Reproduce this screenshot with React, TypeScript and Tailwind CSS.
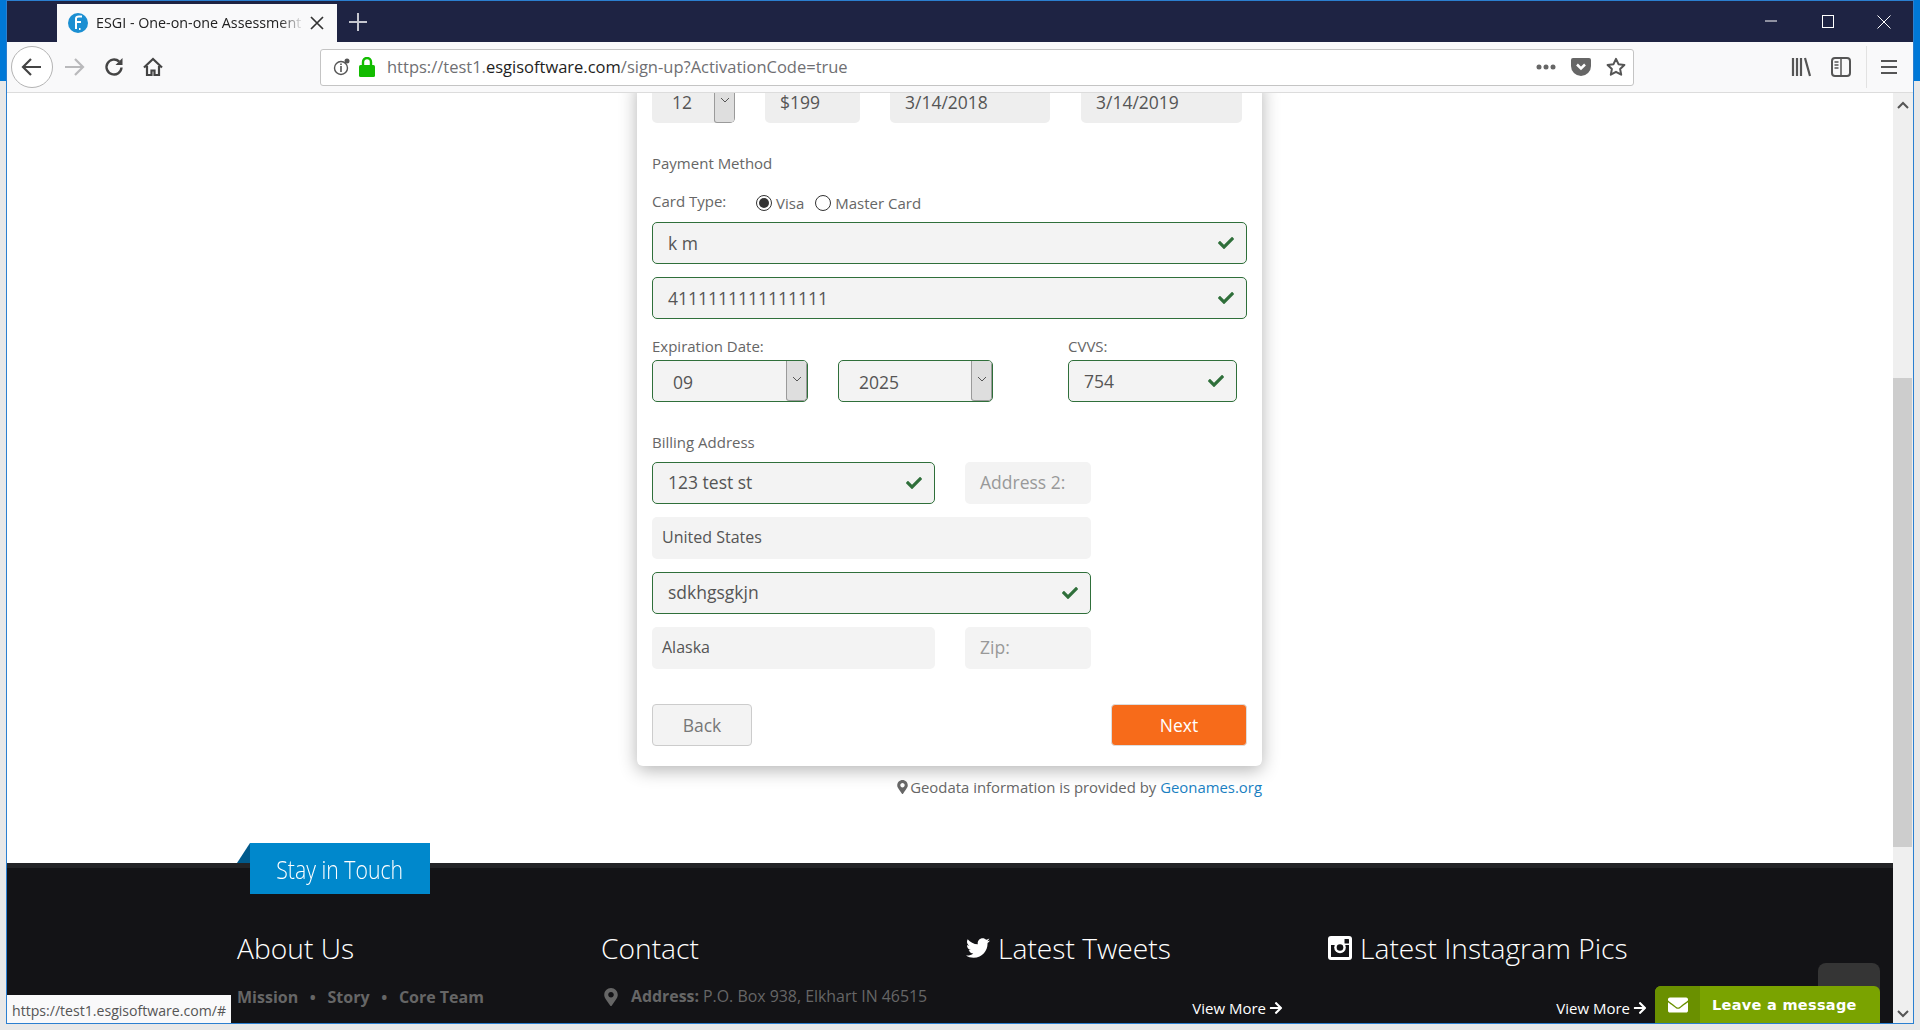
import { ReactNode } from 'react';
import { FaArrowRight, FaCheck, FaEnvelope, FaMapMarkerAlt, FaTwitter } from 'react-icons/fa';

const Check = () => <FaCheck className="w-4 h-4 text-[#2f6f3a] shrink-0" />;

const Field = ({ value, className, valid, placeholder, inset = 'pl-[15px]' }: any) => (
  <div
    className={`h-[42px] rounded-[5px] bg-[#f3f3f3] flex items-center justify-between pr-3 text-[17.5px] ${inset} ${
      valid ? 'border border-[#2f6f3a]' : ''
    } ${placeholder ? 'text-[#999]' : 'text-[#555]'} ${className}`}
  >
    <span>{value}</span>
    {valid && <Check />}
  </div>
);

const Picker = ({ value, className, valid }: any) => (
  <div
    className={`h-[42px] rounded-[5px] bg-[#f3f3f3] flex items-center justify-between text-[17.5px] text-[#555] pl-5 overflow-hidden ${
      valid ? 'border border-[#2f6f3a]' : ''
    } ${className}`}
  >
    <span className={valid ? 'pt-[2px]' : ''}>{value}</span>
    <div className="w-[21px] h-full bg-[#dedede] border-l border-r border-b border-[#9a9a9a] rounded-b-[3px] flex items-center justify-center shrink-0">
      <svg width="10" height="6" viewBox="0 0 10 6" className="-mt-1">
        <path d="M1 1l4 4 4-4" fill="none" stroke="#555" strokeWidth="1" />
      </svg>
    </div>
  </div>
);

const Radio = ({ on }: { on?: boolean }) => (
  <span className="w-4 h-4 rounded-full border border-[#333] bg-white flex items-center justify-center">
    {on && <span className="w-[10px] h-[10px] rounded-full bg-[#333]" />}
  </span>
);

const FooterColumn = ({ title, icon, children }: { title: string; icon?: ReactNode; children: ReactNode }) => (
  <div>
    <div className="h-10 flex items-center gap-2 text-[28.2px] font-light text-white whitespace-nowrap">
      {icon}
      {title}
    </div>
    {children}
  </div>
);

const ViewMore = () => (
  <div className="mt-[30px] flex items-center justify-end gap-[3px] h-5 text-[15px] font-medium text-white">
    View More <FaArrowRight className="w-[14px] h-[14px]" />
  </div>
);

const TitleBar = () => (
  <div className="h-[41px] bg-[#1e2343] flex shrink-0 pl-[50px] pr-[22px]">
    <div className="mt-[3px] w-[280px] h-[38px] bg-[#f9f9fa] flex items-center pl-[11px]">
      <svg width="20" height="20" viewBox="0 0 20 20" className="shrink-0">
        <circle cx="10" cy="10" r="10" fill="#1b8fd2" />
        <path d="M8 16V5.500C8 4 9.500 3.500 11 3.500h3M8 9h5M11 16h1.500" fill="none" stroke="#fff" strokeWidth="2" />
      </svg>
      <span className="ml-2 w-[208px] overflow-hidden whitespace-nowrap text-[14.3px] text-[#222] [mask-image:linear-gradient(to_right,#000_88%,transparent)]">
        ESGI - One-on-one Assessment Tool
      </span>
      <svg width="14" height="14" viewBox="0 0 14 14" className="ml-[6px] shrink-0">
        <path d="M1 1l12 12M13 1L1 13" stroke="#333" strokeWidth="1.7" />
      </svg>
    </div>
    <svg width="18" height="18" viewBox="0 0 18 18" className="ml-[12px] mt-[12px] shrink-0">
      <path d="M9 0v18M0 9h18" stroke="#c5c6cf" strokeWidth="2" />
    </svg>
    <div className="ml-auto flex items-start">
      <svg width="12" height="2" viewBox="0 0 12 2" className="mt-[19px]">
        <path d="M0 1h12" stroke="#fff" />
      </svg>
      <svg width="12" height="13" viewBox="0 0 12 13" className="ml-[45px] mt-[14px]">
        <rect x=".5" y=".5" width="11" height="12" fill="none" stroke="#fff" />
      </svg>
      <svg width="14" height="14" viewBox="0 0 14 14" className="ml-[43px] mt-[14px]">
        <path d="M.5.5l13 13M13.500.5l-13 13" stroke="#fff" />
      </svg>
    </div>
  </div>
);

const Toolbar = () => (
  <div className="h-[51px] bg-[#f9f9fa] border-b border-[#dcdcdc] flex items-center shrink-0 pl-[4px] text-[#4a4a4f]">
    <div className="w-[42px] h-[42px] rounded-full border border-[#b4b4b4] bg-white flex items-center justify-center shrink-0">
      <svg width="22" height="20" viewBox="0 0 22 20">
        <path d="M20 10H3M10 2l-8 8 8 8" fill="none" stroke="#444" strokeWidth="2.2" />
      </svg>
    </div>
    <svg width="22" height="20" viewBox="0 0 22 20" className="ml-[10px] shrink-0">
      <path d="M2 10h17M12 2l8 8-8 8" fill="none" stroke="#b9b9bb" strokeWidth="2.2" />
    </svg>
    <svg width="20" height="20" viewBox="0 0 20 20" className="ml-[19px] shrink-0">
      <path d="M17.500 10.500a7.500 7.500 0 1 1-2.400-6" fill="none" stroke="#444" strokeWidth="2.4" />
      <path d="M18.500 1v7h-7z" fill="#444" />
    </svg>
    <svg width="20" height="20" viewBox="0 0 20 20" className="ml-[19px] shrink-0">
      <path d="M1 10.500L10 2l9 8.500M4 9v9h4.500v-4.500h3V18H16V9" fill="none" stroke="#444" strokeWidth="2.2" />
    </svg>
    <div className="ml-[157px] w-[1314px] h-[37px] bg-white border border-[#c4c4c4] rounded-[3px] flex items-center pl-3 shrink-0">
      <svg width="18" height="18" viewBox="0 0 18 18" className="shrink-0">
        <circle cx="8" cy="10" r="6.500" fill="none" stroke="#555" strokeWidth="1.4" />
        <path d="M8 8v6M8 5.500v1.500" stroke="#555" strokeWidth="1.6" />
        <circle cx="14" cy="3" r="2.500" fill="#555" />
      </svg>
      <svg width="16" height="20" viewBox="0 0 16 20" className="ml-2 shrink-0">
        <rect y="8" width="16" height="12" rx="1.500" fill="#12bc00" />
        <path d="M4 9V5a4 4 0 0 1 8 0v4" fill="none" stroke="#12bc00" strokeWidth="2.4" />
      </svg>
      <span className="ml-3 text-[16.5px] text-[#6f6f73] whitespace-nowrap">
        https://test1.<span className="text-[#1e1e22]">esgisoftware.com</span>/sign-up?ActivationCode=true
      </span>
      <div className="ml-auto flex items-center pr-[7px]">
        <svg width="20" height="6" viewBox="0 0 20 6">
          <circle cx="3" cy="3" r="2.500" fill="#666" />
          <circle cx="10" cy="3" r="2.500" fill="#666" />
          <circle cx="17" cy="3" r="2.500" fill="#666" />
        </svg>
        <svg width="20" height="18" viewBox="0 0 20 18" className="ml-[15px]">
          <path d="M2 0h16a2 2 0 0 1 2 2v6a10 10 0 0 1-20 0V2a2 2 0 0 1 2-2z" fill="#666" />
          <path d="M6 6.500l4 4 4-4" fill="none" stroke="#fff" strokeWidth="2.5" />
        </svg>
        <svg width="20" height="20" viewBox="0 0 20 20" className="ml-[15px]">
          <path d="M10 1.800l2.500 5.400 5.900.7-4.300 4 1.100 5.800L10 14.800l-5.200 2.900 1.100-5.800-4.300-4 5.900-.7z" fill="none" stroke="#555" strokeWidth="2" strokeLinejoin="round" />
        </svg>
      </div>
    </div>
    <svg width="20" height="20" viewBox="0 0 20 20" className="ml-[157px] shrink-0">
      <path d="M2 1v18M6 1v18M10 1v18M14 1l5 18" stroke="#555" strokeWidth="2.2" fill="none" />
    </svg>
    <svg width="20" height="20" viewBox="0 0 20 20" className="ml-[20px] shrink-0">
      <rect x="1" y="1" width="18" height="18" rx="3" fill="none" stroke="#555" strokeWidth="2" />
      <path d="M10 1v18M3.500 5h4M3.500 8h4M3.500 11h4" stroke="#555" strokeWidth="1.5" />
    </svg>
    <div className="ml-[15px] w-px h-[42px] bg-[#e2e2e2] shrink-0" />
    <svg width="16" height="16" viewBox="0 0 16 16" className="ml-[14px] shrink-0">
      <path d="M0 2h16M0 8h16M0 14h16" stroke="#555" strokeWidth="2.2" />
    </svg>
  </div>
);

const SignUpCard = () => (
  <div className="w-[625px] ml-[630px] -mt-[12px] bg-white rounded-b-[6px] shadow-[0_4px_18px_rgba(0,0,0,0.3)] pl-[15px] pr-[15px] pb-5 text-[#666] text-[15px]">
    <div className="flex">
      <Picker value="12" className="w-[83px] !bg-[#eee]" />
      <Field value="$199" className="w-[95px] ml-[30px] !bg-[#eee]" />
      <Field value="3/14/2018" className="w-[160px] ml-[30px] !bg-[#eee]" />
      <Field value="3/14/2019" className="w-[161px] ml-[31px] !bg-[#eee]" />
    </div>
    <div className="mt-[30px] h-5 leading-5">Payment Method</div>
    <div className="mt-5 h-5 flex items-center">
      <span className="w-[104px] pb-[3px]">Card Type:</span>
      <Radio on />
      <span className="ml-1 mt-px">Visa</span>
      <span className="ml-[11px]">
        <Radio />
      </span>
      <span className="ml-1 mt-px">Master Card</span>
    </div>
    <Field value="k m" valid className="mt-[9px]" />
    <Field value="4111111111111111" valid className="mt-[13px]" />
    <div className="mt-[17px] flex">
      <div className="w-[156px]">
        <div className="h-5 leading-5 mb-1 whitespace-nowrap">Expiration Date:</div>
        <Picker value="09" valid />
      </div>
      <div className="w-[155px] ml-[30px] pt-6">
        <Picker value="2025" valid />
      </div>
      <div className="w-[169px] ml-[75px]">
        <div className="h-5 leading-5 mb-1">CVVS:</div>
        <Field value="754" valid />
      </div>
    </div>
    <div className="mt-[30px] mb-[10px] h-5 leading-5">Billing Address</div>
    <div className="w-[439px] flex flex-col gap-[13px]">
      <div className="flex justify-between">
        <Field value="123 test st" valid className="w-[283px] pb-px" />
        <Field value="Address 2:" placeholder className="w-[126px] pb-px" />
      </div>
      <Field value="United States" inset="pl-[10px]" className="!text-[16px] pb-[2px]" />
      <Field value="sdkhgsgkjn" valid className="pb-px" />
      <div className="flex justify-between">
        <Field value="Alaska" inset="pl-[10px]" className="w-[283px] !text-[16px] pb-[2px]" />
        <Field value="Zip:" placeholder className="w-[126px] pb-px" />
      </div>
    </div>
    <div className="mt-[35px] flex justify-between text-[17.5px]">
      <button className="w-[100px] h-[42px] bg-[#f3f3f3] border border-[#ccc] rounded-[4px] text-[#777]">Back</button>
      <button className="w-[136px] h-[42px] bg-[#f76b1a] border border-[#ddd] rounded-[4px] text-white">Next</button>
    </div>
  </div>
);

const Footer = () => (
  <div className="relative mt-[66px] h-[160px] bg-[#131316] border-t-[5px] border-[#222326] pl-[230px]">
    <div className="absolute left-[230px] -top-[25px] w-[13px] h-5 bg-[#005a8c] [clip-path:polygon(100%_0,100%_100%,0_100%)]" />
    <div className="absolute left-[243px] -top-[25px] w-[180px] h-[51px] bg-[#0088cc] flex items-center justify-center pt-[3px] text-white text-[25px] font-light">
      <span className="scale-x-[0.85] whitespace-nowrap">Stay in Touch</span>
    </div>
    <div className="pt-[60px] grid grid-cols-[364px_365px_362px_319px]">
      <FooterColumn title="About Us">
        <div className="mt-[19px] h-5 leading-5 text-[16px] font-bold text-[#666] whitespace-nowrap">
          Mission <span className="mx-[7.5px]">•</span> Story <span className="mx-[7.5px]">•</span> Core Team
        </div>
      </FooterColumn>
      <FooterColumn title="Contact">
        <div className="mt-[19px] h-5 flex items-center text-[15.9px] text-[#666] whitespace-nowrap">
          <FaMapMarkerAlt className="w-[14px] h-[18px] ml-[3px] mr-[13px]" />
          <span className="font-bold mr-1">Address:</span> P.O. Box 938, Elkhart IN 46515
        </div>
      </FooterColumn>
      <FooterColumn title="Latest Tweets" icon={<FaTwitter className="w-6 h-6 text-white" />}>
        <div className="w-[317px]">
          <ViewMore />
        </div>
      </FooterColumn>
      <FooterColumn
        title="Latest Instagram Pics"
        icon={
          <svg width="24" height="24" viewBox="0 0 24 24" className="shrink-0">
            <rect width="24" height="24" rx="3" fill="#fff" />
            <path d="M3 11h18v9.500a.5.5 0 0 1-.5.5h-17a.5.5 0 0 1-.5-.5z" fill="#131316" />
            <rect x="3" y="9" width="18" height="2" fill="#131316" />
            <circle cx="12" cy="11.500" r="5.800" fill="#fff" />
            <circle cx="12" cy="11.500" r="3.300" fill="#131316" />
            <rect x="16.500" y="3" width="4.500" height="4.500" rx=".5" fill="#131316" />
          </svg>
        }
      >
        <ViewMore />
      </FooterColumn>
    </div>
  </div>
);

export default function App() {
  return (
    <div className="w-[1920px] h-[1030px] overflow-hidden bg-[linear-gradient(to_bottom,#0078d7_81px,#e8e8e8_81px)] font-['Open_Sans',sans-serif]">
      <div className="ml-[6px] w-[1908px] h-[1024px] border border-[#2b7fd0] flex flex-col bg-white">
        <TitleBar />
        <Toolbar />
        <div className="relative flex-1 flex min-h-0">
          <div className="w-[1886px] overflow-hidden">
            <SignUpCard />
            <div className="w-[625px] ml-[630px] mt-[11px] h-5 flex items-center justify-end gap-[2px] text-[14.9px] text-[#666]">
              <FaMapMarkerAlt className="w-[11px] h-[14px]" />
              <span>
                Geodata information is provided by <span className="text-[#1a7fc1]">Geonames.org</span>
              </span>
            </div>
            <Footer />
          </div>
          <div className="w-5 bg-[#efefef] relative">
            <svg width="12" height="8" viewBox="0 0 12 8" className="absolute left-[4px] top-[8px]">
              <path d="M1 7l5-5 5 5" fill="none" stroke="#555" strokeWidth="2" />
            </svg>
            <div className="absolute left-0 right-[1px] top-[285px] h-[469px] bg-[#cdcdcd]" />
            <svg width="12" height="8" viewBox="0 0 12 8" className="absolute left-[4px] bottom-[5px]">
              <path d="M1 1l5 5 5-5" fill="none" stroke="#555" strokeWidth="2" />
            </svg>
          </div>
          <div className="absolute left-0 bottom-0 w-[224px] h-[28px] bg-[#f9f9fa] flex items-center pl-[5px] pt-1 text-[14.1px] text-[#555] whitespace-nowrap">
            https://test1.esgisoftware.com/#
          </div>
          <div className="absolute left-[1811px] bottom-[23px] w-[62px] h-[37px] rounded-t-[8px] bg-[#353535]" />
          <div className="absolute left-[1648px] bottom-0 w-[225px] h-[37px] rounded-t-[6px] overflow-hidden bg-[#7aa300] flex items-center text-white">
            <div className="w-[45px] h-full bg-[#6a9000] flex items-center justify-center">
              <FaEnvelope className="w-5 h-5" />
            </div>
            <span className="ml-3 pt-[3px] font-['DejaVu_Sans',sans-serif] text-[14.5px] font-bold tracking-[0.3px]">
              Leave a message
            </span>
          </div>
        </div>
      </div>
    </div>
  );
}
